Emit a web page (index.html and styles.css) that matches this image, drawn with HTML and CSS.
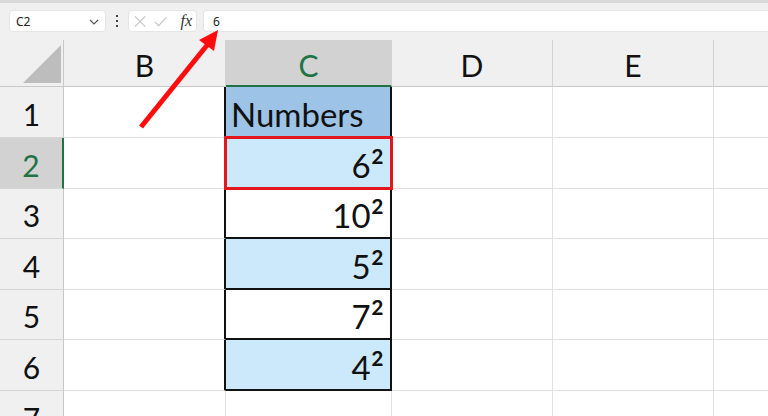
FILE: index.html
```html
<!DOCTYPE html>
<html>
<head>
<meta charset="utf-8">
<link rel="stylesheet" href="styles.css">
</head>
<body>
<div class="app">
  <div class="toolbar">
    <div class="namebox">
      <span class="name">C2</span>
      <svg class="chev" width="10" height="6" viewBox="0 0 10 6"><path d="M1 1 L5 5 L9 1" fill="none" stroke="#555" stroke-width="1.2"/></svg>
    </div>
    <div class="dots"><i></i><i></i><i></i></div>
    <div class="fxbox">
      <svg width="13" height="13" viewBox="0 0 13 13"><path d="M1 1 L12 12 M12 1 L1 12" stroke="#c4c4c4" stroke-width="1.2" fill="none"/></svg>
      <svg width="14" height="11" viewBox="0 0 14 11"><path d="M1 6 L5 10 L13 1" stroke="#c4c4c4" stroke-width="1.2" fill="none"/></svg>
      <span class="fx">fx</span>
    </div>
    <div class="formula">6</div>
  </div>

  <div class="sheet">
    <div class="corner"><svg width="64" height="47" viewBox="0 0 64 47"><polygon points="23,43 61,43 61,5" fill="#bdbdbd"/></svg></div>
    <div class="colhdr">B</div>
    <div class="colhdr sel">C</div>
    <div class="colhdr">D</div>
    <div class="colhdr">E</div>
    <div class="colhdr last"></div>

    <div class="rowhdr">1</div>
    <div class="cell bcol"></div>
    <div class="cell data title"><span class="v">Numbers</span></div>
    <div class="cell"></div>
    <div class="cell"></div>
    <div class="cell last"></div>

    <div class="rowhdr sel">2</div>
    <div class="cell bcol"></div>
    <div class="cell data light active"><span class="v">6<span class="sup">²</span></span></div>
    <div class="cell"></div>
    <div class="cell"></div>
    <div class="cell last"></div>

    <div class="rowhdr">3</div>
    <div class="cell bcol"></div>
    <div class="cell data"><span class="v">10<span class="sup">²</span></span></div>
    <div class="cell"></div>
    <div class="cell"></div>
    <div class="cell last"></div>

    <div class="rowhdr">4</div>
    <div class="cell bcol"></div>
    <div class="cell data light"><span class="v">5<span class="sup">²</span></span></div>
    <div class="cell"></div>
    <div class="cell"></div>
    <div class="cell last"></div>

    <div class="rowhdr">5</div>
    <div class="cell bcol"></div>
    <div class="cell data"><span class="v">7<span class="sup">²</span></span></div>
    <div class="cell"></div>
    <div class="cell"></div>
    <div class="cell last"></div>

    <div class="rowhdr">6</div>
    <div class="cell bcol"></div>
    <div class="cell data light"><span class="v">4<span class="sup">²</span></span></div>
    <div class="cell"></div>
    <div class="cell"></div>
    <div class="cell last"></div>

    <div class="rowhdr">7</div>
    <div class="cell"></div>
    <div class="cell"></div>
    <div class="cell"></div>
    <div class="cell"></div>
    <div class="cell last"></div>
  </div>

  <svg class="arrow" width="768" height="416" viewBox="0 0 768 416">
    <line x1="141" y1="127" x2="208" y2="44" stroke="#ff0d0d" stroke-width="5"/>
    <polygon points="218,30 214,51 199,40" fill="#ff0d0d"/>
  </svg>
</div>
</body>
</html>
```

FILE: styles.css
```css
* { box-sizing: border-box; }
html, body { margin: 0; padding: 0; }
body {
  width: 768px;
  height: 416px;
  overflow: hidden;
  background: #ffffff;
  font-family: "Noto Sans", "Liberation Sans", sans-serif;
}
.app {
  position: relative;
  width: 768px;
  height: 416px;
  overflow: hidden;
}

/* toolbar */
.toolbar {
  height: 40px;
  background: #f0f0f0;
  border-top: 3px solid #d9d9d9;
  display: flex;
  align-items: flex-start;
  padding-top: 7px;
}
.namebox {
  margin-left: 9px;
  width: 97px;
  height: 22px;
  background: #fff;
  border: 1px solid #e6e6e6;
  border-radius: 4px;
  display: flex;
  align-items: center;
  justify-content: space-between;
  padding: 0 6px 0 6px;
}
.name { font-size: 12px; color: #222; }
.chev { margin-top: 1px; }
.dots {
  width: 22px;
  height: 22px;
  display: flex;
  flex-direction: column;
  align-items: center;
  justify-content: center;
  gap: 3px;
}
.dots i {
  display: block;
  width: 2px;
  height: 2px;
  background: #444;
}
.fxbox {
  width: 69px;
  height: 22px;
  background: #fff;
  border: 1px solid #e6e6e6;
  border-radius: 4px;
  display: flex;
  align-items: center;
  padding: 0 4px 0 5px;
  gap: 8px;
}
.fx {
  font-family: "Liberation Serif", "DejaVu Serif", serif;
  font-style: italic;
  font-size: 16px;
  color: #333;
  margin-left: 5px;
}
.formula {
  margin-left: 6px;
  flex: 1;
  height: 22px;
  background: #fff;
  border: 1px solid #e6e6e6;
  border-right: none;
  border-radius: 4px 0 0 4px;
  font-size: 12px;
  color: #222;
  display: flex;
  align-items: center;
  padding-left: 9px;
}

/* sheet */
.sheet {
  display: grid;
  grid-template-columns: 64px 162px 166px 161px 161px 1fr;
  grid-template-rows: 47px 51px 51px 50px 51px 50px 51px 51px;
  font-family: Lato, "Liberation Sans", sans-serif;
  color: #111;
}
.corner {
  background: #f0f0f0;
  border-right: 1px solid #c8c8c8;
  border-bottom: 1px solid #c8c8c8;
}
.corner svg { display: block; }
.colhdr {
  background: #f0f0f0;
  border-right: 1px solid #d2d2d2;
  border-bottom: 1px solid #c8c8c8;
  display: flex;
  align-items: center;
  justify-content: center;
  font-size: 30px;
  padding-top: 4px;
}
.colhdr.sel {
  background: #d2d2d2;
  color: #217346;
  border-bottom: 2px solid #217346;
}
.colhdr.last, .cell.last { border-right: none; }
.rowhdr {
  background: #f0f0f0;
  border-right: 1px solid #c8c8c8;
  border-bottom: 1px solid #d6d6d6;
  display: flex;
  align-items: center;
  justify-content: center;
  font-size: 30px;
  padding-top: 3px;
}
.rowhdr.sel {
  background: #d2d2d2;
  color: #217346;
  border-right: 2px solid #217346;
}
.cell {
  border-right: 1px solid #e1e1e1;
  border-bottom: 1px solid #e1e1e1;
}
.cell.bcol { border-right: 2px solid #111; }
.cell.data {
  background: #fff;
  border-right: 2px solid #111;
  border-bottom: 2px solid #111;
  display: flex;
  align-items: center;
  justify-content: flex-end;
  padding: 4px 6px 0 5px;
  font-size: 33px;
}
.v { line-height: 40px; }
.sup {
  font-size: 40px;
  line-height: 0;
  vertical-align: -4px;
}
.cell.title {
  background: #9dc3e6;
  justify-content: flex-start;
}
.cell.light { background: #cce8fb; }
.cell.active { position: relative; }
.cell.active::after {
  content: "";
  position: absolute;
  left: -2px;
  top: -2px;
  right: -3px;
  bottom: -3px;
  border: 3px solid #e3161c;
}

.arrow {
  position: absolute;
  left: 0;
  top: 0;
  pointer-events: none;
}
```
